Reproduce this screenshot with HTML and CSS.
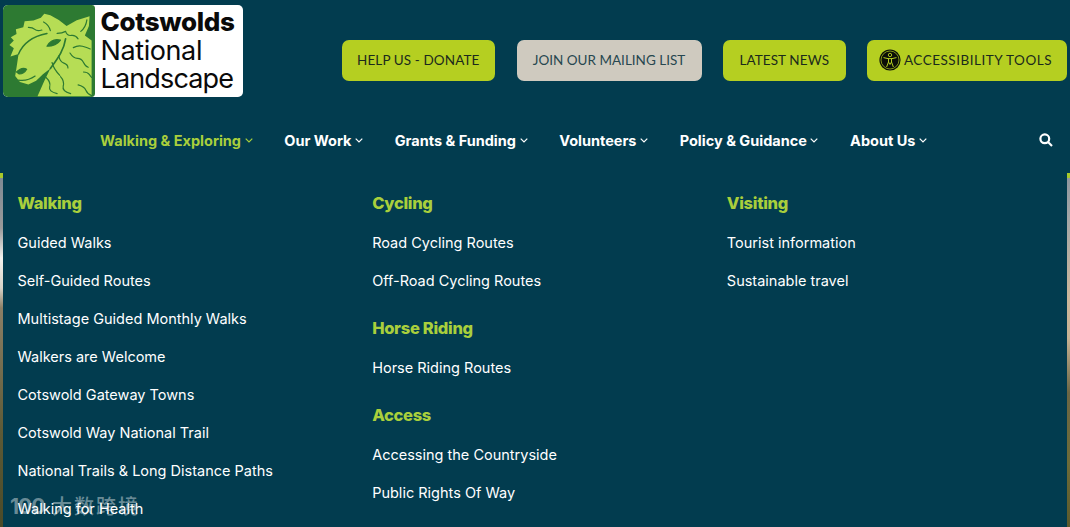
FILE: index.html
```html
<!DOCTYPE html>
<html lang="en">
<head>
<meta charset="utf-8">
<title>Cotswolds National Landscape</title>
<link rel="stylesheet" href="styles.css">
</head>
<body>
<header class="site-header">
  <div class="top-row">
    <a class="logo" href="#">
      <span class="logo-mark">
        <svg viewBox="10 0 272 272" width="92" height="92" aria-hidden="true">
          <rect x="10" y="0" width="272" height="272" rx="10" fill="#2d7a32"/>
          <path fill="#b6dd55" d="M112 270 L132 225 L150 188 L128 205 L108 224 L85 235 L60 228 L46 210 L50 185 L56 145 L32 152 L42 128 L29 118 L42 105 L33 95 L50 86 L48 72 L70 66 L74 48 L100 46 L122 38 L132 26 L150 30 L175 44 L198 62 L228 45 L266 33 L264 62 L252 90 L272 105 L272 270 Z"/>
          <g fill="none" stroke="#2d7a32" stroke-width="3.5" stroke-linecap="round" stroke-linejoin="round">
            <path stroke-width="4.5" d="M56 145 C70 110 100 92 140 84"/>
            <path d="M85 66 Q98 66 104 72 T125 74"/>
            <path d="M130 50 Q146 58 150 76"/>
            <path d="M170 84 Q185 84 195 78 Q200 92 212 90 T232 100"/>
            <path d="M140 122 C150 105 165 100 180 104 C170 118 155 122 140 122Z" fill="#2d7a32"/>
            <path stroke-width="5" d="M150 188 C170 160 190 135 195 100"/>
            <path d="M218 126 Q232 118 245 122 T268 130"/>
            <path d="M208 142 Q218 158 230 158 T248 170 T262 184"/>
            <path d="M175 150 Q178 168 190 172 T202 186"/>
            <path d="M248 198 Q260 198 265 205 T272 214"/>
            <path d="M180 212 Q192 225 188 240 T210 262"/>
            <path d="M155 170 Q160 190 178 208"/>
            <path d="M138 215 Q152 228 148 242 T170 262"/>
            <path d="M232 236 Q250 240 255 252 T272 268"/>
            <path d="M50 198 Q66 182 80 190 Q72 204 58 204Z" fill="#2d7a32"/>
            <path d="M56 222 Q82 226 105 210"/>
            <path d="M240 78 C250 70 256 58 258 44"/>
          </g>
        </svg>
      </span>
      <span class="logo-text"><b>Cotswolds</b><span>National</span><span class="logo-land">Landscape</span></span>
    </a>
    <div class="actions">
      <a class="btn btn-donate" href="#">HELP US - DONATE</a>
      <a class="btn btn-beige" href="#">JOIN OUR MAILING LIST</a>
      <a class="btn btn-news" href="#">LATEST NEWS</a>
      <a class="btn btn-tools" href="#">
        <svg class="tools-icon" viewBox="0 0 22 22" width="22" height="22" aria-hidden="true">
          <circle cx="11" cy="11" r="10.6" fill="#0b0f08"/>
          <circle cx="11" cy="11" r="9" fill="none" stroke="#b5cf21" stroke-width=".7"/>
          <circle cx="11" cy="6" r="1.7" fill="none" stroke="#b5cf21" stroke-width=".9"/>
          <path d="M4.5 8.6 L9 9.6 H13 L17.5 8.6 M9.5 9.6 L9.5 13 L7.6 18 M12.5 9.6 L12.5 13 L14.4 18 M9.5 13 L11 15.5 L12.5 13" fill="none" stroke="#b5cf21" stroke-width="1"/>
        </svg>
        ACCESSIBILITY TOOLS
      </a>
    </div>
  </div>
  <nav class="main-nav">
    <a class="nav-item nav-active" href="#">Walking &amp; Exploring<svg class="chev" viewBox="0 0 8 5"><path d="M.7.7 4 4 7.3.7"/></svg></a>
    <a class="nav-item" href="#">Our Work<svg class="chev" viewBox="0 0 8 5"><path d="M.7.7 4 4 7.3.7"/></svg></a>
    <a class="nav-item" href="#">Grants &amp; Funding<svg class="chev" viewBox="0 0 8 5"><path d="M.7.7 4 4 7.3.7"/></svg></a>
    <a class="nav-item" href="#">Volunteers<svg class="chev" viewBox="0 0 8 5"><path d="M.7.7 4 4 7.3.7"/></svg></a>
    <a class="nav-item" href="#">Policy &amp; Guidance<svg class="chev" viewBox="0 0 8 5"><path d="M.7.7 4 4 7.3.7"/></svg></a>
    <a class="nav-item" href="#">About Us<svg class="chev" viewBox="0 0 8 5"><path d="M.7.7 4 4 7.3.7"/></svg></a>
    <a class="search" href="#" aria-label="Search">
      <svg viewBox="0 0 14 14" width="14" height="14"><circle cx="5.8" cy="5.8" r="4.4"/><path d="M9 9 13 13"/></svg>
    </a>
  </nav>
</header>
<section class="hero">
  <div class="mega-menu">
    <div class="menu-col">
      <h3>Walking</h3>
      <ul>
        <li>Guided Walks</li>
        <li>Self-Guided Routes</li>
        <li>Multistage Guided Monthly Walks</li>
        <li>Walkers are Welcome</li>
        <li>Cotswold Gateway Towns</li>
        <li>Cotswold Way National Trail</li>
        <li>National Trails &amp; Long Distance Paths</li>
        <li>Walking for Health</li>
      </ul>
    </div>
    <div class="menu-col">
      <h3>Cycling</h3>
      <ul>
        <li>Road Cycling Routes</li>
        <li>Off-Road Cycling Routes</li>
      </ul>
      <h3>Horse Riding</h3>
      <ul>
        <li>Horse Riding Routes</li>
      </ul>
      <h3>Access</h3>
      <ul>
        <li>Accessing the Countryside</li>
        <li>Public Rights Of Way</li>
      </ul>
    </div>
    <div class="menu-col">
      <h3>Visiting</h3>
      <ul>
        <li>Tourist information</li>
        <li>Sustainable travel</li>
      </ul>
    </div>
  </div>
</section>
<div class="watermark"><span class="wm-num">100</span>大数跨境</div>
</body>
</html>
```
FILE: styles.css
```css
* { box-sizing: border-box; }
html, body { margin: 0; height: 527px; overflow: hidden; }
body { background: #023c4f; font-family: "Inter", "Noto Sans CJK SC", sans-serif; color: #fff; position: relative; }
a { color: inherit; text-decoration: none; }

.site-header { height: 173px; display: flex; flex-direction: column; }
.top-row { display: flex; padding: 5px 3px 0; height: 117px; }
.logo { display: flex; width: 240px; height: 92px; background: #fff; border-radius: 5px; overflow: hidden; color: #0a0a0a; }
.logo-mark { display: block; width: 92px; height: 92px; }
.logo-mark svg { display: block; }
.logo-text { display: flex; flex-direction: column; padding: 3px 0 0 5.5px; font-size: 27px; line-height: 28.5px; letter-spacing: -.4px; }
.logo-text b { font-weight: 800; font-size: 26px; letter-spacing: -.35px; }
.logo-land { letter-spacing: -.85px; }

.actions { display: flex; gap: 21.5px; margin-left: 99px; margin-top: 35px; height: 41px; }
.btn { display: flex; align-items: center; justify-content: center; gap: 5px; height: 41px; padding: 0 0 2px; border-radius: 7px; background: #b5cf21; color: #1b2a1c; font-family: "Lato", sans-serif; font-size: 13.5px; letter-spacing: .1px; white-space: nowrap; }
.btn-donate { width: 153.5px; }
.btn-beige { width: 185px; background: #cfcabf; color: #27474f; letter-spacing: 0; }
.btn-news { width: 122.5px; }
.btn-tools { width: 200px; gap: 3px; padding-right: 3px; letter-spacing: .5px; }

.main-nav { display: flex; align-items: center; padding: 0 17px 0 100px; height: 46px; }
.nav-item { display: flex; align-items: center; gap: 3.5px; margin-right: 31.7px; font-size: 14.5px; font-weight: 700; white-space: nowrap; }
.nav-active { color: #a9cf3c; }
.chev { width: 8px; height: 5px; fill: none; stroke: currentColor; stroke-width: 1.2; }
.search { margin-left: auto; display: flex; }
.search svg { fill: none; stroke: #fff; stroke-width: 2.2; }

.hero { height: 354px; padding: 0 3px; overflow: hidden;
  background:
    linear-gradient(#a8c92a 0 5px, #7f8a94 5px, #9a9a9a 55px, #f4f2ee 85px, #d8d3c8 115px, #8b7f66 135px, #5d5a36 260px, #4a4a28 100%) left top / 3px 100% no-repeat,
    linear-gradient(#a8c92a 0 5px, #8f979f 5px, #a3a6a6 45px, #cdb79b 125px, #c8b394 165px, #6b6644 220px, #6d6b38 290px, #5c5a2c 100%) right top / 3px 100% no-repeat; }
.mega-menu { display: grid; grid-template-columns: repeat(3, 1fr); height: 100%; background: #023c4f; padding-top: 17px; }
.menu-col { padding-left: 14.5px; }
.menu-col h3 { margin: 0; height: 26px; line-height: 26px; font-size: 16.5px; font-weight: 800; letter-spacing: -.3px; color: #a9cf3c; }
.menu-col ul { list-style: none; margin: 0 0 10px; padding: 14px 0 0; }
.menu-col h3 + ul + h3 { margin-top: -1px; }
.menu-col li { height: 38px; line-height: 26px; font-size: 14.5px; white-space: nowrap; }

.watermark { position: absolute; left: 10px; top: 494px; font-size: 20px; font-weight: 500; line-height: 26px; color: rgba(255,255,255,.42); letter-spacing: 2px; display: flex; align-items: center; gap: 4px; white-space: nowrap; }
.wm-num { width: 38px; font-size: 21px; font-weight: 700; letter-spacing: -1px; }
```
